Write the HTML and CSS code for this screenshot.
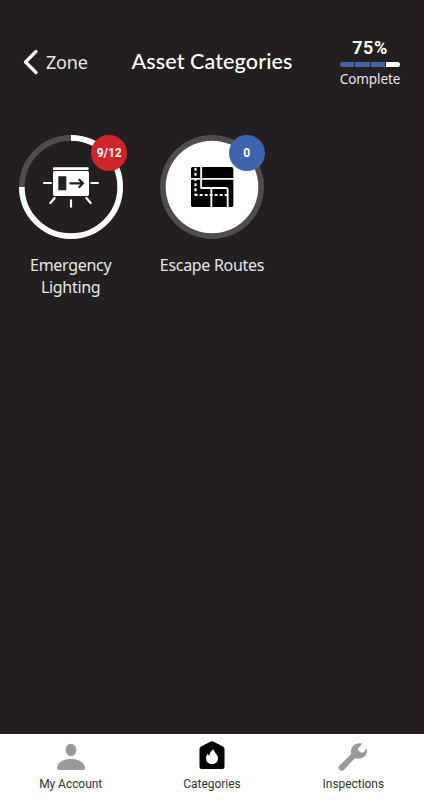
FILE: index.html
```html
<!DOCTYPE html>
<html lang="en">
<head>
<meta charset="utf-8">
<title>Asset Categories</title>
<link rel="stylesheet" href="styles.css">
</head>
<body>
<div class="app">
  <header class="header">
    <a class="back">
      <svg class="back-icon" viewBox="0 0 16 26"><path d="M13 2.500 2.500 13 13 23.500" fill="none" stroke="#fff" stroke-width="3.300" stroke-linecap="round" stroke-linejoin="round"/></svg>
      <span class="back-label">Zone</span>
    </a>
    <h1 class="title">Asset Categories</h1>
    <div class="progress">
      <strong class="percent">75%</strong>
      <div class="bar"><i class="seg"></i><i class="seg"></i><i class="seg"></i><i class="seg rest"></i></div>
      <span class="complete">Complete</span>
    </div>
  </header>
  <main class="grid">
    <div class="category">
      <div class="dial">
        <svg class="ring" viewBox="26 29 312 312">
          <circle cx="182" cy="185" r="147.500" fill="none" stroke="#504c4d" stroke-width="17"/>
          <path d="M182 37.500A147.500 147.500 0 1 1 34.500 185" fill="none" stroke="#fff" stroke-width="17"/>
          <g fill="#fff">
            <rect x="128" y="126" width="107" height="8" rx="3"/>
            <path fill-rule="evenodd" d="M133 137h98q5 0 5 5v65q0 5-5 5h-98q-5 0-5-5v-65q0-5 5-5zM144 153v42h24v-42z"/>
          </g>
          <path d="M180 174h37M207 163l11 11-11 11" fill="none" stroke="#231f20" stroke-width="6.500" stroke-linecap="round" stroke-linejoin="round"/>
          <path d="M101 173h21M243 173h20M133 218l-13 15M182 225v19M228 218l13 15" fill="none" stroke="#fff" stroke-width="6.500" stroke-linecap="round"/>
        </svg>
        <span class="badge red">9/12</span>
      </div>
      <span class="name">Emergency Lighting</span>
    </div>
    <div class="category">
      <div class="dial">
        <svg class="ring" viewBox="30 29 312 312">
          <circle cx="186" cy="185" r="156" fill="#504c4d"/>
          <circle cx="186" cy="185" r="139" fill="#fff"/>
          <rect x="123" y="125" width="127" height="120" rx="5" fill="#000"/>
          <g fill="none" stroke="#fff">
            <path d="M122 160.500H251M153.500 124v64H227q6 0 6 6v52M184 188v58" stroke-width="5.500"/>
            <path d="M136.500 127V209" stroke-width="6.500" stroke-dasharray="9 6.500"/>
            <path d="M134 209H231" stroke-width="6" stroke-dasharray="9 6"/>
          </g>
        </svg>
        <span class="badge blue">0</span>
      </div>
      <span class="name">Escape Routes</span>
    </div>
  </main>
  <nav class="tabs">
    <a class="tab">
      <svg class="tab-icon" viewBox="0 0 30 30" fill="#999"><ellipse cx="15" cy="9" rx="5.300" ry="6.200"/><path d="M1 27C1 21.500 8 18 15 18S29 21.500 29 27q0 2-2 2H3q-2 0-2-2z"/></svg>
      <span class="tab-label">My Account</span>
    </a>
    <a class="tab">
      <svg class="tab-icon" viewBox="0 0 30 30"><path d="M13.800.500q1.200-.6 2.400 0L26 5.500q1.500 1 1.500 2.500V26q0 2-2 2h-21q-2 0-2-2V8q0-1.500 1.500-2.500z"/><path d="M16.500 8.300c.2 3 4.500 5 4.500 9a6 6 0 0 1-12 0c0-2 .8-3.500 1.800-4.600.4 1 .9 1.600 1.700 1.800.1-2.500 1.500-4.900 4-6.200z" fill="#fff"/></svg>
      <span class="tab-label">Categories</span>
    </a>
    <a class="tab">
      <svg class="tab-icon" viewBox="0 0 30 30" fill="#999"><path d="M24.300 2.700C19 .800 11.800 4.500 13 13.200L1.500 24.500a3 3 0 0 0 0 4.200 3 3 0 0 0 4.500 0L16.800 17.200C24 19.300 30.300 14 29 7.600L25.300 11.300q-1 .8-2.200.3l-2.700-2q-.8-1-.2-2.300z"/></svg>
      <span class="tab-label">Inspections</span>
    </a>
  </nav>
</div>
</body>
</html>
```
FILE: styles.css
```css
* { box-sizing: border-box; }
body { margin: 0; background: #231f20; color: #fff; font-family: "Noto Sans", sans-serif; }
.app { height: 800px; display: flex; flex-direction: column; }
.header { display: grid; grid-template-columns: 108px 208px 108px; align-items: start; height: 134.700px; padding-top: 37px; }
.back { display: flex; align-items: center; gap: 7px; padding: 12px 0 0 23px; }
.back-icon { width: 16px; height: 26px; }
.back-label { font-size: 18px; line-height: 26px; letter-spacing: -.2px; color: #e6e6e6; }
.title { margin: 10px 0 0; text-align: center; font: 500 21.500px/28px Lato, sans-serif; letter-spacing: .12px; white-space: nowrap; }
.progress { display: flex; flex-direction: column; align-items: center; }
.percent { font: 700 18px/21px Roboto, sans-serif; letter-spacing: .5px; }
.bar { display: flex; gap: 1px; width: 60px; height: 5px; margin-top: 4px; border-radius: 3px; overflow: hidden; }
.seg { flex: 1; background: #3d64ad; }
.rest { background: #fff; }
.complete { margin-top: 2px; font-size: 13.500px; line-height: 20px; letter-spacing: -.1px; color: #e6e6e6; }
.grid { flex: 1; display: grid; grid-template-columns: repeat(3, 1fr); align-items: start; }
.category { display: flex; flex-direction: column; align-items: center; }
.dial { position: relative; width: 104px; height: 104px; }
.ring { display: block; width: 104px; height: 104px; }
.badge { position: absolute; top: 0; right: -4.500px; width: 36px; height: 36px; border-radius: 50%; text-align: center; font: 700 12px/36px Roboto, sans-serif; letter-spacing: -.1px; }
.red { background: #d1232a; }
.blue { right: -.7px; background: #3d64ad; }
.name { width: 120px; margin-top: 15px; text-align: center; font-size: 16px; line-height: 22px; letter-spacing: -.3px; color: #e6e6e6; }
.tabs { height: 66px; display: grid; grid-template-columns: repeat(3, 1fr); background: #fff; color: #333; }
.tab { display: flex; flex-direction: column; align-items: center; padding-top: 7px; }
.tab-icon { width: 30px; height: 30px; }
.tab-label { margin-top: 5px; font: 400 12px/16px Roboto, sans-serif; letter-spacing: -.05px; }
```
